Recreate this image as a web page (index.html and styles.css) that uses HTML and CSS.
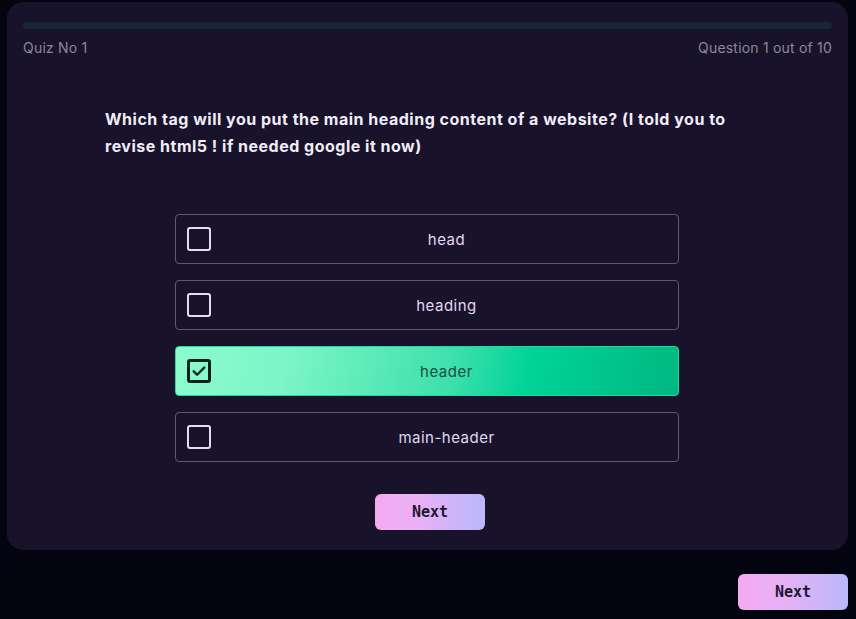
FILE: index.html
```html
<!DOCTYPE html>
<html lang="en">
<head>
<meta charset="utf-8">
<link rel="stylesheet" href="styles.css">
</head>
<body>
<div class="page">
  <section class="card">
    <div class="progress"><div class="progress-fill"></div></div>
    <div class="meta">
      <span>Quiz No 1</span>
      <span>Question 1 out of 10</span>
    </div>
    <h1 class="question">Which tag will you put the main heading content of a website? (I told you to revise html5 ! if needed google it now)</h1>
    <div class="options">
      <div class="option"><span class="box"></span><span class="label">head</span></div>
      <div class="option"><span class="box"></span><span class="label">heading</span></div>
      <div class="option selected"><span class="box"><svg viewBox="0 0 24 24" width="18" height="18"><path d="M5 12.5l4.5 4.5L19 7.5" fill="none" stroke="#0f2a24" stroke-width="3.2" stroke-linecap="round" stroke-linejoin="round"/></svg></span><span class="label">header</span></div>
      <div class="option"><span class="box"></span><span class="label">main-header</span></div>
    </div>
    <div class="actions"><button class="btn">Next</button></div>
  </section>
  <div class="footer"><button class="btn">Next</button></div>
</div>
</body>
</html>
```
FILE: styles.css
```css
* { box-sizing: border-box; }
html, body { margin: 0; padding: 0; }
body {
  background: #03040f;
  font-family: Inter, "Noto Sans", sans-serif;
  width: 856px;
  height: 619px;
  overflow: hidden;
}
.page {
  padding: 2px 8px 0 7px;
}
.card {
  background: #18132a;
  border-radius: 16px;
  height: 548px;
  padding: 20px 16px 0 16px;
}
.progress {
  height: 7px;
  border-radius: 4px;
  background: #182631;
}
.meta {
  display: flex;
  justify-content: space-between;
  margin-top: 10px;
  font-size: 14px;
  line-height: 18px;
  color: #8c869a;
  letter-spacing: 0.2px;
}
.question {
  margin: 49px 0 0 82px;
  width: 640px;
  font-size: 16px;
  line-height: 27px;
  font-weight: 700;
  color: #f1ecf7;
  letter-spacing: 0.5px;
}
.options {
  margin: 54px 0 0 152px;
  width: 504px;
  display: flex;
  flex-direction: column;
  gap: 16px;
}
.option {
  height: 50px;
  border: 1px solid #5e5872;
  border-radius: 4px;
  display: flex;
  align-items: center;
  padding-left: 11px;
}
.box {
  width: 24px;
  height: 24px;
  border: 2.5px solid #ead8f7;
  border-radius: 3px;
  display: flex;
  align-items: center;
  justify-content: center;
  flex-shrink: 0;
}
.label {
  flex: 1;
  text-align: center;
  font-size: 15px;
  color: #e3d7f1;
  padding-left: 4px;
  letter-spacing: 0.5px;
}
.option.selected {
  border-color: #22d9a0;
  background: linear-gradient(100deg, #8cfccd 0%, #7cf5c8 22%, #3de0ab 55%, #00d398 70%, #00b87f 100%);
}
.option.selected .box {
  border-color: #10201c;
  border-width: 3px;
}
.option.selected .label {
  color: #1d4c3e;
}
.actions {
  display: flex;
  justify-content: center;
  margin-top: 32px;
  padding-left: 5px;
}
.btn {
  width: 110px;
  height: 36px;
  border: none;
  border-radius: 6px;
  background: linear-gradient(90deg, #f4aaf2 0%, #e8b0f5 40%, #b9b8fb 100%);
  font-family: "DejaVu Sans Mono", "Liberation Mono", monospace;
  font-weight: bold;
  font-size: 15px;
  color: #1d1830;
}
.footer {
  display: flex;
  justify-content: flex-end;
  margin-top: 24px;
}
```
